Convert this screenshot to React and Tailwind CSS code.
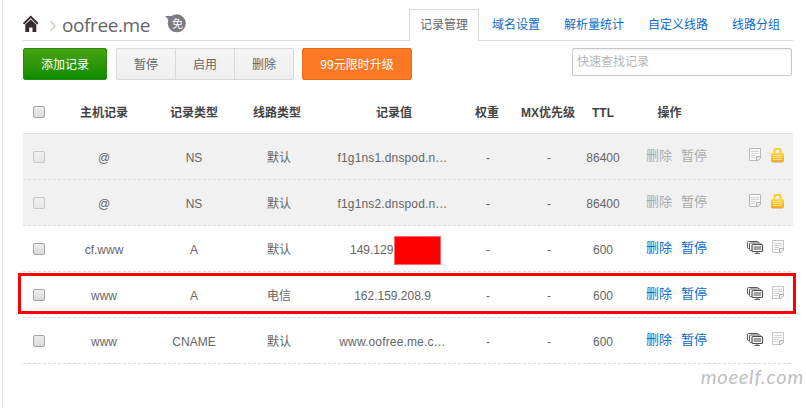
import React from "react";

const tabs = ["域名设置", "解析量统计", "自定义线路", "线路分组"];

const records = [
  { host: "@", type: "NS", line: "默认", value: "f1g1ns1.dnspod.n…", ttl: "86400", locked: true, wide: true },
  { host: "@", type: "NS", line: "默认", value: "f1g1ns2.dnspod.n…", ttl: "86400", locked: true, wide: true },
  { host: "cf.www", type: "A", line: "默认", value: "149.129", ttl: "600", masked: true },
  { host: "www", type: "A", line: "电信", value: "162.159.208.9", ttl: "600", marked: true },
  { host: "www", type: "CNAME", line: "默认", value: "www.oofree.me.c…", ttl: "600", wide: true },
];

const columns = "grid grid-cols-[32px_98px_82px_88px_142px_46px_76px_32px_101px_73px] items-center";

function HomeIcon() {
  return (
    <svg width="16" height="17" viewBox="0 0 16 17" className="block">
      <path d="M0.6 8.800 7.800 1.900l7 6.900" fill="none" stroke="#342d2c" strokeWidth="2" />
      <path d="M2.300 9.600 7.800 4.400l5.500 5.200V17H9.500v-4.600H6.200V17H2.300z" fill="#342d2c" />
    </svg>
  );
}

function FreeBadge() {
  return (
    <span className="relative block h-[19px] w-[21px]">
      <svg width="21" height="19" viewBox="0 0 21 19" className="block">
        <circle cx="11.800" cy="9.300" r="9" fill="#7a7c7f" />
        <path d="M0 2h7L4 8.500C3.600 5.500 2 3.500 0 2z" fill="#7a7c7f" />
      </svg>
      <span className="absolute top-[2px] left-[7px] text-[11px] leading-[16px] text-white">免</span>
    </span>
  );
}

function NoteIcon({ faded }) {
  const c = faded ? "#c6c6c6" : "#b8b8b8";
  return (
    <svg width="13" height="14" viewBox="0 0 13 14" className="block">
      <path d="M.5.5h11v8L7.500 12.500h-7z" fill="#fafafa" stroke={c} />
      <path d="M2 3.500h8M2 5.500h8M2 7.500h5M2 9.500h4" stroke="#d4d4d4" fill="none" />
      <path d="M7.500 12.500v-4h4v1.500L9 12.500z" fill="#eee" stroke="#b0b0b0" />
    </svg>
  );
}

function LockIcon() {
  return (
    <svg width="14" height="15" viewBox="0 0 14 15" className="block">
      <defs>
        <linearGradient id="lockBody" x1="0" y1="0" x2="0" y2="1">
          <stop offset="0" stopColor="#ffd83c" />
          <stop offset="1" stopColor="#fba62a" />
        </linearGradient>
      </defs>
      <path d="M3.500 6V2.500Q3.500 1 5 1h3Q9.500 1 9.500 2.500V6" fill="none" stroke="#f9cb3c" strokeWidth="2" />
      <rect x="0" y="5" width="13" height="9" rx="1.200" fill="url(#lockBody)" />
      <path d="M2 7.500h9M2 9.500h9M2 11.500h9" stroke="#ffe680" />
      <path d="M1 14.500h11" stroke="#d9cdb5" />
    </svg>
  );
}

function MonitorIcon() {
  return (
    <svg width="17" height="14" viewBox="0 0 17 14" className="block">
      <rect x=".5" y=".5" width="11" height="7" rx="1" fill="#fff" stroke="#5a5a5a" />
      <rect x="2.500" y="2" width="11" height="7.500" rx="1" fill="#fff" stroke="#5a5a5a" />
      <rect x="5" y="3.500" width="10.500" height="7" rx="1" fill="#fff" stroke="#505050" strokeWidth="1.200" />
      <rect x="6.500" y="5" width="7.500" height="4" fill="#a3a3a3" />
      <path d="M7.500 12.500h5.500" stroke="#666" />
      <path d="M9 11.500h2.500" stroke="#999" />
    </svg>
  );
}

function Checkbox({ disabled }) {
  return (
    <span
      className={
        "block h-[12px] w-[12px] justify-self-center rounded-[2px] border bg-gradient-to-b " +
        (disabled ? "border-[#c8c8c8] from-[#f0f0f0] to-[#e6e6e6]" : "border-[#a3a3a3] from-[#eeeeee] to-[#dadada]")
      }
    />
  );
}

function RecordRow({ r }) {
  const action = r.locked ? "text-[#aaaaaa]" : "text-[#0c6ccb]";
  return (
    <div
      className={
        columns +
        " relative h-[46px] text-center text-[12px] whitespace-nowrap text-[#666] " +
        (r.locked ? "bg-[#f1f1f1]" : "")
      }
    >
      <Checkbox disabled={r.locked} />
      <span className="pt-[2px]">{r.host}</span>
      <span className="pt-[2px]">{r.type}</span>
      <span className="pt-[2px]">{r.line}</span>
      {r.masked ? (
        <span className="flex items-center pt-[2px] pl-[27px]">
          {r.value}
          <span className="ml-px h-[29px] w-[47px] border border-[#ff6b6b] bg-[#ff0000]" />
        </span>
      ) : (
        <span className={"pt-[2px] pr-[3px] " + (r.wide ? "tracking-[0.150px]" : "")}>{r.value}</span>
      )}
      <span className="pt-[2px]">-</span>
      <span className="pt-[2px]">-</span>
      <span className="flex justify-center pt-[2px]">{r.ttl}</span>
      <span className={"flex gap-[9px] pb-[2px] pl-[27px] text-[13px] " + action}>
        <a>删除</a>
        <a>暂停</a>
      </span>
      <span className={"flex items-start justify-end pr-[8px] pb-[3px] " + (r.locked ? "gap-[9px]" : "gap-[8px]")}>
        {r.locked ? (
          <>
            <NoteIcon />
            <LockIcon />
          </>
        ) : (
          <>
            <span className="pt-px"><MonitorIcon /></span>
            <NoteIcon faded />
          </>
        )}
      </span>
      <svg className="absolute bottom-0 left-0 block" width="770" height="1" viewBox="0 0 770 1">
        <path d="M0 .5h770" stroke="#dcdcdc" strokeDasharray="3 2" />
      </svg>
      {r.marked && <div className="absolute top-px -left-[5px] h-[41px] w-[778px] border-[3px] border-[#ff0000]" />}
    </div>
  );
}

export default function App() {
  return (
    <div className="h-[408px] w-[806px] overflow-hidden bg-white pl-[2px] font-['Liberation_Sans','Noto_Sans_CJK_SC',sans-serif]">
      <div className="relative h-full border-l border-[#dddddd] pl-[20px]">
        <header className="flex h-[41px] w-[770px] border-b border-[#dadada]">
          <div className="flex w-[386px] items-start">
            <div className="pt-[15px]"><HomeIcon /></div>
            <svg width="6" height="10" viewBox="0 0 6 10" className="mt-[21px] ml-[11px] block">
              <path d="M.7.500 5 5 .7 9.500" fill="none" stroke="#c9c9c9" strokeWidth="1.300" />
            </svg>
            <h1 className="mt-[12px] ml-[6px] w-[103px] font-['Open_Sans',sans-serif] text-[19px] leading-[26px] tracking-[-0.400px] text-[#666]">
              oofree.me
            </h1>
            <div className="pt-[14px]"><FreeBadge /></div>
          </div>
          <nav className="flex pt-[9px] text-[12px] leading-[32px] whitespace-nowrap text-[#0c6ccb]">
            <a className="-mb-px h-[32px] w-[70px] border border-b-0 border-[#dadada] bg-white text-center leading-[30px] text-[#666]">
              记录管理
            </a>
            <div className="flex gap-[24px] pl-[13px]">
              {tabs.map((t) => (
                <a key={t}>{t}</a>
              ))}
            </div>
          </nav>
        </header>

        <div className="flex w-[770px] items-start pt-[7px] text-[12px] leading-[30px]">
          <button className="h-[32px] w-[84px] rounded-[2px] border border-[#2b8a10] bg-gradient-to-b from-[#45a314] to-[#078c00] pt-px text-white">
            添加记录
          </button>
          <div className="ml-[9px] flex h-[32px] w-[178px] divide-x divide-[#d9d9d9] rounded-[2px] border border-[#d9d9d9] bg-gradient-to-b from-[#f5f5f5] to-[#efefef] text-[#666]">
            <button className="h-[30px] w-[59px] pt-px">暂停</button>
            <button className="h-[30px] w-[59px] pt-px">启用</button>
            <button className="h-[30px] flex-1 pt-px">删除</button>
          </div>
          <button className="ml-[8px] h-[32px] w-[110px] rounded-[2px] border border-[#e56c1b] bg-[#fc7823] pt-px text-white">
            99元限时升级
          </button>
          <div className="ml-[160px] h-[28px] w-[220px] rounded-[2px] border border-[#c8c8c8] pl-[4px] leading-[27px] text-[#b5b5b5] shadow-[inset_0_1px_2px_rgba(0,0,0,0.08)]">
            快速查找记录
          </div>
        </div>

        <div className="w-[770px]">
          <div className={columns + " mt-[11px] h-[43px] border-b border-[#e3e3e3] text-center text-[12px] font-bold whitespace-nowrap text-[#444]"}>
            <Checkbox />
            <span className="pt-[2px]">主机记录</span>
            <span className="pt-[2px]">记录类型</span>
            <span className="pt-[2px] pr-[4px]">线路类型</span>
            <span className="pt-[2px]">记录值</span>
            <span className="pt-[2px] pr-[2px]">权重</span>
            <span className="pt-[2px] pr-[2px]">MX优先级</span>
            <span className="pt-[2px]">TTL</span>
            <span className="pt-[2px]">操作</span>
          </div>
          {records.map((r, i) => (
            <RecordRow key={i} r={r} />
          ))}
        </div>

        <div className="absolute top-[363px] right-[2px] font-[Lato] text-[20px] leading-[26px] font-normal tracking-[0.800px] text-[#c0c0c0] italic">
          moeelf.com
        </div>
      </div>
    </div>
  );
}
